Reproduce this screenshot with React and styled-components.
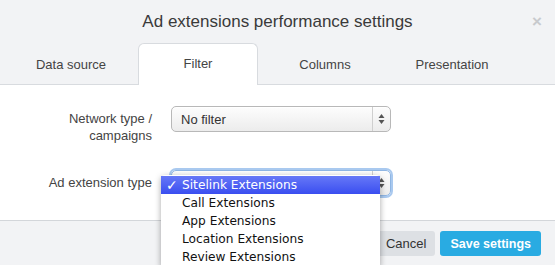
import React from 'react'
import styled, { createGlobalStyle } from 'styled-components'

const Global = createGlobalStyle`
	html, body {
		margin: 0;
		padding: 0;
		background: #fff;
	}
	body {
		font-family: 'Liberation Sans', Arial, sans-serif;
		color: #444;
	}
`

const Modal = styled.div`
	position: relative;
	width: 555px;
	height: 265px;
	overflow: hidden;
	display: flex;
	flex-direction: column;
`
const Header = styled.header`
	background: #f2f3f5;
	border-bottom: 1px solid #d8dbdf;
`
const TitleBar = styled.div`
	height: 43px;
	display: flex;
	align-items: center;
	justify-content: center;
	position: relative;
`
const Title = styled.h3`
	margin: 0;
	font-size: 17px;
	font-weight: normal;
	color: #3a3a3a;
`
const Close = styled.span`
	position: absolute;
	right: 13px;
	top: 13px;
	font-size: 17px;
	font-weight: bold;
	color: #c8cacd;
	line-height: 1;
`
const Tabs = styled.ul`
	display: flex;
	gap: 7px;
	margin: 0 0 -1px;
	padding: 0 0 0 11px;
	list-style: none;
`
const Tab = styled.li`
	width: 120px;
	box-sizing: border-box;
	display: flex;
	align-items: center;
	justify-content: center;
	font-size: 13px;
	color: #444;
	border: 1px solid ${p => (p.active ? '#d8dbdf' : 'transparent')};
	border-bottom: 0;
	border-radius: 6px 6px 0 0;
	background: ${p => (p.active ? '#fff' : 'transparent')};
	height: ${p => (p.active ? '42px' : '41px')};
	margin-top: ${p => (p.active ? '0' : '1px')};
	padding-bottom: 2px;
`
const Body = styled.div`
	flex: 1;
	background: #fff;
	padding: 21px 0 0;
	display: flex;
	flex-direction: column;
	gap: 26px;
`
const Row = styled.div`
	display: grid;
	grid-template-columns: 152px 220px;
	column-gap: 19px;
	align-items: start;
`
const Label = styled.label`
	text-align: right;
	font-size: 13px;
	line-height: 17px;
	color: #444;
	padding-top: 4px;
`
const Select = styled.div`
	position: relative;
	height: 26px;
	box-sizing: border-box;
	border: 1px solid ${p => (p.focused ? '#8fb6e4' : '#b8b8b8')};
	border-radius: 5px;
	background: linear-gradient(#fdfdfd, #ececec);
	box-shadow: ${p => (p.focused ? '0 0 0 2px #a9c9ef' : 'inset 0 1px 0 #fff')};
	display: flex;
	align-items: center;
	font-size: 13px;
	color: #333;
	padding-left: 9px;
`
const Arrows = styled.span`
	position: absolute;
	right: 0;
	top: 0;
	bottom: 0;
	width: 17px;
	border-left: 1px solid #cfcfcf;
	display: flex;
	align-items: center;
	justify-content: center;
`
const Footer = styled.footer`
	height: 45px;
	background: #f2f3f5;
	border-top: 1px solid #d3d6da;
	display: flex;
	justify-content: flex-end;
	align-items: flex-start;
	gap: 5px;
	padding: 10px 14px 0 0;
	box-sizing: border-box;
`
const Button = styled.button`
	height: 25px;
	border: 0;
	border-radius: 3px;
	font-family: 'Liberation Sans', Arial, sans-serif;
	font-size: ${p => (p.primary ? '12.5px' : '13px')};
	padding: 0 ${p => (p.primary ? '10px' : '9px')};
	background: ${p => (p.primary ? '#29abe2' : '#dde0e4')};
	color: ${p => (p.primary ? '#fff' : '#333')};
	font-weight: ${p => (p.primary ? 'bold' : 'normal')};
`
const Menu = styled.ul`
	position: absolute;
	left: 161px;
	top: 175px;
	width: 219px;
	margin: 0;
	padding: 1px 0 0;
	list-style: none;
	background: #fff;
	box-shadow: 0 2px 6px rgba(0, 0, 0, 0.35);
	border-radius: 4px 4px 0 0;
	font-family: 'DejaVu Sans', 'Lucida Grande', sans-serif;
	font-size: 12.2px;
	color: #111;
`
const Item = styled.li`
	height: 18px;
	line-height: 18px;
	padding-left: 21px;
	position: relative;
	background: ${p => (p.selected ? 'linear-gradient(#6678f7, #3a4ef0)' : 'transparent')};
	color: ${p => (p.selected ? '#fff' : '#111')};
`
const Check = styled.span`
	position: absolute;
	left: 5px;
	top: 0;
	font-size: 14px;
	font-weight: bold;
`

const UpDown = () => (
	<svg width='7' height='12' viewBox='0 0 7 12'>
		<path d='M3.5 1 L6.5 5 L0.5 5 Z' fill='#555' />
		<path d='M3.5 11 L6.5 7 L0.5 7 Z' fill='#555' />
	</svg>
)

const options = ['Sitelink Extensions', 'Call Extensions', 'App Extensions', 'Location Extensions', 'Review Extensions']

const App = () => (
	<Modal>
		<Global />
		<Header>
			<TitleBar>
				<Title>Ad extensions performance settings</Title>
				<Close>×</Close>
			</TitleBar>
			<Tabs>
				<Tab>Data source</Tab>
				<Tab active>Filter</Tab>
				<Tab>Columns</Tab>
				<Tab>Presentation</Tab>
			</Tabs>
		</Header>
		<Body>
			<Row>
				<Label>
					Network type /<br />
					campaigns
				</Label>
				<Select>
					No filter
					<Arrows>
						<UpDown />
					</Arrows>
				</Select>
			</Row>
			<Row>
				<Label>Ad extension type</Label>
				{/* the open menu covers this select's value */}
				<Select focused>
					<Arrows>
						<UpDown />
					</Arrows>
				</Select>
			</Row>
		</Body>
		<Footer>
			<Button>Cancel</Button>
			<Button primary>Save settings</Button>
		</Footer>
		<Menu>
			{options.map((o, i) => (
				<Item key={o} selected={i === 0}>
					{i === 0 && <Check>✓</Check>}
					{o}
				</Item>
			))}
		</Menu>
	</Modal>
)

export default App
